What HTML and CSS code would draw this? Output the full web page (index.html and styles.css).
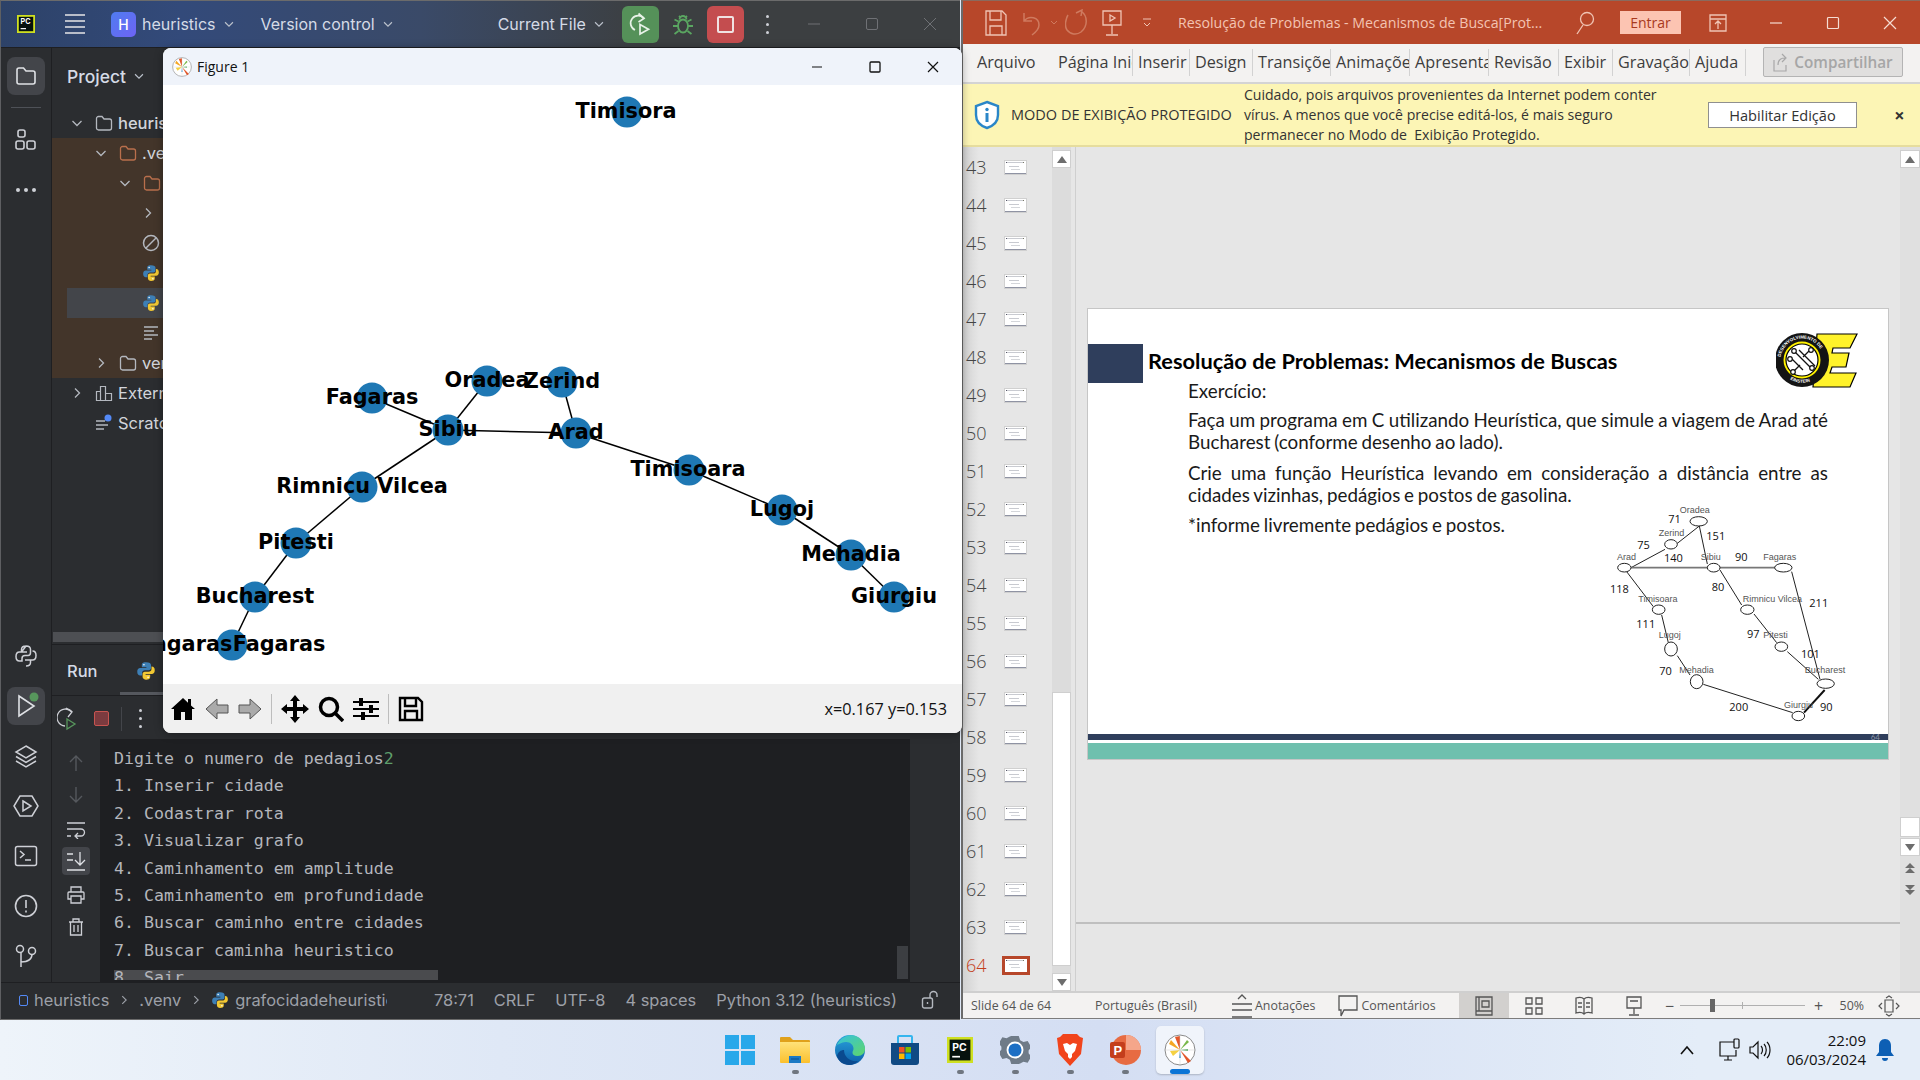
FILE: index.html
```html
<!DOCTYPE html>
<html lang="pt-BR">
<head>
  <meta charset="UTF-8" />
  <title>Desktop</title>
  <link rel="stylesheet" href="styles.css">
</head>
<body>
<svg class="defs" width="0" height="0">
  <defs>
    <linearGradient id="edgeBlue" x1="0" y1="0" x2="0" y2="1"><stop offset="0" stop-color="#2aa3dd"/><stop offset="1" stop-color="#0c5ea8"/></linearGradient>
    <linearGradient id="edgeGreen" x1="0" y1="0" x2="1" y2="1"><stop offset="0" stop-color="#35c1e0"/><stop offset="1" stop-color="#5fd66a"/></linearGradient>
    <linearGradient id="fold" x1="0" y1="0" x2="0" y2="1"><stop offset="0" stop-color="#ffe27a"/><stop offset="1" stop-color="#fbc02d"/></linearGradient>
  </defs>
  <symbol id="chev" viewBox="0 0 16 16"><path d="M3.500 6l4.500 4.500L12.500 6" fill="none" stroke="currentColor" stroke-width="1.300"/></symbol>
  <symbol id="chevr" viewBox="0 0 16 16"><path d="M6 3.500l4.500 4.500L6 12.500" fill="none" stroke="currentColor" stroke-width="1.300"/></symbol>
  <symbol id="folder" viewBox="0 0 18 18"><path d="M1.500 4.500a2 2 0 0 1 2-2h3.500l2 2.500h5.500a2 2 0 0 1 2 2v7a2 2 0 0 1-2 2h-11a2 2 0 0 1-2-2z" fill="none" stroke="currentColor" stroke-width="1.300"/></symbol>
  <symbol id="py" viewBox="0 0 24 24">
    <path d="M12 1.500c-4.500 0-5 1.800-5 3.500v2.500h5.500v1H5C3 8.500 1.500 10 1.500 13S3 17.500 5 17.500h2.300v-3c0-2 1.500-3.300 3.500-3.300h4.500c1.600 0 2.700-1.200 2.700-2.700V5c0-2-1.700-3.500-6-3.500z" fill="#3d7fb5"/>
    <path d="M12 22.500c4.500 0 5-1.800 5-3.500v-2.500h-5.500v-1H19c2 0 3.500-1.500 3.500-4.500S21 6.500 19 6.500h-.4v3c0 2-1.500 3.300-3.500 3.300h-4.500c-1.600 0-2.700 1.200-2.700 2.700V19c0 2 1.700 3.500 4.600 3.500z" fill="#f2c832"/>
    <circle cx="9.500" cy="4.500" r="1" fill="#fff"/><circle cx="14.500" cy="19.500" r="1" fill="#fff"/>
  </symbol>
  <symbol id="mpl" viewBox="0 0 32 32">
    <circle cx="16" cy="16" r="15" fill="#fff" stroke="#8a8a8a"/>
    <path d="M16 16L5 10l2-4z" fill="#f5a623"/><path d="M16 16L11 3l5-1z" fill="#e2572b"/><path d="M16 16l7-10 2 2z" fill="#79b84a"/>
    <path d="M16 16l11 11 -3 2z" fill="#e2572b"/><path d="M16 16L9 22l-3-5z" fill="#f5d142"/><path d="M16 16l1 8-2 0z" fill="#4c9fd6"/><path d="M16 16l8 1 0-2z" fill="#4fae5b"/>
    <path d="M2 16h28M16 2v28" stroke="#cfcfcf" stroke-width=".5"/>
  </symbol>
  <symbol id="pc" viewBox="0 0 20 20"><rect x="1" y="1" width="18" height="18" fill="#06120e" stroke="#cfe021" stroke-width="2"/><text x="4" y="10.500" font-size="8" font-family="Inter" font-weight="700" fill="#fff">PC</text><rect x="4" y="14.500" width="6" height="1.300" fill="#fff"/></symbol>
</svg>

<div class="desktop">

  <!-- PyCharm -->
  <div class="ide">
    <div class="ide-top">
      <svg class="pc-logo"><use href="#pc"/></svg>
      <div class="burger"><i></i><i></i><i></i><i></i></div>
      <div class="h-tile">H</div>
      <span class="top-label">heuristics</span><svg class="top-chev"><use href="#chev"/></svg>
      <span class="top-label vc">Version control</span><svg class="top-chev"><use href="#chev"/></svg>
      <span class="top-label cf">Current File</span><svg class="top-chev"><use href="#chev"/></svg>
      <div class="btn-green">
        <svg width="22" height="24" viewBox="0 0 22 24" fill="none" stroke="#e8f2e8" stroke-width="1.700"><path d="M15 6.500A7.500 7.500 0 1 0 6 18"/><path d="M9.500 1.500l5.500 5-5.500 3.500"/><path d="M11 12.500l8.500 4.800-8.500 4.700z"/></svg>
      </div>
      <svg class="bug" width="22" height="22" viewBox="0 0 22 22" fill="none" stroke="#5aa661" stroke-width="1.800"><ellipse cx="11" cy="13" rx="5" ry="6.500"/><path d="M7.500 6.500a3.500 3.500 0 0 1 7 0M7 3l2 2M15 3l-2 2M6 13H1M21 13h-5M6.500 18L2.500 21M15.500 18l4 3M6.500 8.500L2.500 6.500M15.500 8.500l4-2"/></svg>
      <div class="btn-red"><i></i></div>
      <div class="kebab"><i></i><i></i><i></i></div>
      <div class="win-btns dim">
        <svg width="14" height="14" viewBox="0 0 14 14"><path d="M1 7h12" stroke="currentColor"/></svg>
        <svg width="14" height="14" viewBox="0 0 14 14"><rect x="1.500" y="1.500" width="11" height="11" rx="1.500" fill="none" stroke="currentColor"/></svg>
        <svg width="14" height="14" viewBox="0 0 14 14"><path d="M1 1l12 12M13 1L1 13" stroke="currentColor"/></svg>
      </div>
    </div>

    <div class="ide-main">
      <div class="strip">
        <div class="strip-group">
          <div class="tool on"><svg width="24" height="24" viewBox="0 0 24 24" fill="none" stroke="#dfe1e5" stroke-width="1.600"><path d="M3 6a2 2 0 0 1 2-2h4.500l2.500 3h7a2 2 0 0 1 2 2v9a2 2 0 0 1-2 2H5a2 2 0 0 1-2-2z"/></svg></div>
          <div class="strip-sep"></div>
          <div class="tool"><svg width="22" height="24" viewBox="0 0 22 24" fill="none" stroke="#ced0d6" stroke-width="1.600"><rect x="3" y="2" width="7" height="7" rx="2"/><rect x="1" y="13" width="8" height="8" rx="2"/><rect x="12" y="13" width="8" height="8" rx="2"/></svg></div>
          <div class="tool"><svg width="22" height="6" viewBox="0 0 22 6" fill="#ced0d6"><circle cx="3" cy="3" r="2"/><circle cx="11" cy="3" r="2"/><circle cx="19" cy="3" r="2"/></svg></div>
        </div>
        <div class="strip-group">
          <div class="tool"><svg width="24" height="24" viewBox="0 0 24 24" fill="none" stroke="#ced0d6" stroke-width="1.500"><path d="M12 2c-3.500 0-4.500 1.500-4.500 3.500V8H13M7.500 8H5.500C3.500 8 2 9.500 2 12.500S3.500 17 5.500 17H8v-2.500c0-2 1.500-3 3-3h3c2 0 2.500-1 2.500-3v-3C16.500 3.500 15.500 2 12 2zM12 22c3.500 0 4.500-1.500 4.500-3.500V16H11M16.500 16h2c2 0 3.500-1.500 3.500-4.500S20.500 7 18.500 7"/></svg></div>
          <div class="tool on"><svg width="30" height="30" viewBox="0 0 30 30" fill="none"><path d="M8 5l15 10-15 10z" stroke="#dfe1e5" stroke-width="1.600"/><circle cx="23" cy="6" r="4.500" fill="#57965c"/></svg></div>
          <div class="tool"><svg width="24" height="24" viewBox="0 0 24 24" fill="none" stroke="#ced0d6" stroke-width="1.500"><path d="M12 2l10 6-10 6L2 8zM2 12.500l10 6 10-6M2 17l10 6 10-6"/></svg></div>
          <div class="tool"><svg width="26" height="24" viewBox="0 0 26 24" fill="none" stroke="#ced0d6" stroke-width="1.500"><path d="M7 2h12l6 10-6 10H7L1 12z"/><path d="M10 7l8 5-8 5z"/></svg></div>
          <div class="tool"><svg width="24" height="22" viewBox="0 0 24 22" fill="none" stroke="#ced0d6" stroke-width="1.500"><rect x="1.500" y="1.500" width="21" height="19" rx="2"/><path d="M6 6l4 3.500L6 13M11 15h6"/></svg></div>
          <div class="tool"><svg width="24" height="24" viewBox="0 0 24 24" fill="none" stroke="#ced0d6" stroke-width="1.600"><circle cx="12" cy="12" r="10.500"/><path d="M12 6v8M12 16.500v2"/></svg></div>
          <div class="tool"><svg width="22" height="24" viewBox="0 0 22 24" fill="none" stroke="#ced0d6" stroke-width="1.500"><circle cx="5" cy="5" r="3.500"/><circle cx="17" cy="7" r="3.500"/><path d="M6 9v14M6 18c6 0 11-2 11-8"/></svg></div>
        </div>
      </div>

      <div class="ide-content">
        <div class="project">
          <div class="project-head"><span>Project</span><svg class="top-chev"><use href="#chev"/></svg></div>
          <div class="row lv1"><svg class="chev"><use href="#chev"/></svg><svg class="ico gray"><use href="#folder"/></svg><b>heuristics</b></div>
          <div class="row lv2 brown"><svg class="chev"><use href="#chev"/></svg><svg class="ico orange"><use href="#folder"/></svg><span>.venv</span></div>
          <div class="row lv3 brown"><svg class="chev"><use href="#chev"/></svg><svg class="ico orange"><use href="#folder"/></svg><span>Lib</span></div>
          <div class="row lv4 brown"><svg class="chev"><use href="#chevr"/></svg></div>
          <div class="row lv5 brown"><svg class="ico" viewBox="0 0 18 18" fill="none" stroke="#b4b8bf" stroke-width="1.500"><circle cx="9" cy="9" r="7.500"/><path d="M4 14L14 4"/></svg></div>
          <div class="row lv5 brown"><svg class="ico"><use href="#py"/></svg></div>
          <div class="row lv5 brown selected"><svg class="ico"><use href="#py"/></svg></div>
          <div class="row lv5 brown"><svg class="ico" viewBox="0 0 18 18" stroke="#b4b8bf" stroke-width="1.500"><path d="M2 3h14M2 7h10M2 11h14M2 15h8"/></svg></div>
          <div class="row lv2 brown"><svg class="chev"><use href="#chevr"/></svg><svg class="ico gray"><use href="#folder"/></svg><span>venv</span></div>
          <div class="row lv1"><svg class="chev"><use href="#chevr"/></svg><svg class="ico" viewBox="0 0 18 18" fill="none" stroke="#b4b8bf" stroke-width="1.200"><path d="M1.500 16.500v-9h4v9zM5.500 16.500v-14h5v14zM10.500 16.500v-7h6v7z"/></svg><span>External Libraries</span></div>
          <div class="row lv1"><i class="chev"></i><svg class="ico" viewBox="0 0 18 18"><path d="M1 7h9M1 11h12M1 15h8" stroke="#b4b8bf" stroke-width="1.500"/><circle cx="13" cy="4" r="3.500" fill="#548af7"/></svg><span>Scratches</span></div>
          <div class="h-scroll"></div>
        </div>

        <div class="run-head">
          <span>Run</span>
          <svg class="run-py"><use href="#py"/></svg>
          <i class="run-dot"></i>
          <i class="run-tab"></i>
        </div>
        <div class="run-tools">
          <svg width="22" height="26" viewBox="0 0 22 26" fill="none" stroke="#ced0d6" stroke-width="1.300"><path d="M15 6A8.500 8.500 0 1 0 8 20"/><path d="M9 2l6 4-4 5"/><path d="M10 13l8 5-8 5z" stroke="#57965c"/></svg>
          <i class="stop"></i>
          <i class="tool-sep"></i>
          <div class="kebab small"><i></i><i></i><i></i></div>
        </div>
        <div class="run-body">
          <div class="gutter">
            <svg width="16" height="18" viewBox="0 0 16 18" fill="none" stroke="#55585d" stroke-width="1.400"><path d="M8 17V2M2 8l6-6 6 6"/></svg>
            <svg width="16" height="18" viewBox="0 0 16 18" fill="none" stroke="#55585d" stroke-width="1.400"><path d="M8 1v15M2 10l6 6 6-6"/></svg>
            <svg width="20" height="18" viewBox="0 0 20 18" fill="none" stroke="#ced0d6" stroke-width="1.300"><path d="M1 2h18M1 8h14a3 3 0 0 1 0 7H9M12 12l-3 3 3 3M1 15h4"/></svg>
            <div class="gut-on"><svg width="20" height="20" viewBox="0 0 20 20" fill="none" stroke="#dfe1e5" stroke-width="1.300"><path d="M1 3h6M1 9h6M1 19h18M14 1v13M9 9l5 5 5-5"/></svg></div>
            <svg width="20" height="18" viewBox="0 0 20 18" fill="none" stroke="#ced0d6" stroke-width="1.300"><path d="M5 6V1h10v5M5 13H2V7a1 1 0 0 1 1-1h14a1 1 0 0 1 1 1v6h-3M5 10h10v7H5z"/></svg>
            <svg width="16" height="18" viewBox="0 0 16 18" fill="none" stroke="#ced0d6" stroke-width="1.300"><path d="M1 4h14M5 4V1h6v3M2.500 4v13h11V4M6 7v7M10 7v7"/></svg>
          </div>
          <div class="console">
            <i class="con-hbar"></i>
            <i class="con-vbar"></i>
            <div class="con-line">Digite o numero de pedagios<em>2</em></div>
            <div class="con-line">1. Inserir cidade</div>
            <div class="con-line">2. Codastrar rota</div>
            <div class="con-line">3. Visualizar grafo</div>
            <div class="con-line">4. Caminhamento em amplitude</div>
            <div class="con-line">5. Caminhamento em profundidade</div>
            <div class="con-line">6. Buscar caminho entre cidades</div>
            <div class="con-line">7. Buscar caminha heuristico</div>
            <div class="con-line">8. Sair</div>
          </div>
          <div class="con-right"></div>
        </div>
      </div>
    </div>

    <div class="ide-status">
      <i class="mod-square"></i><span class="st-a">heuristics</span>
      <svg class="st-chev"><use href="#chevr"/></svg><span>.venv</span>
      <svg class="st-chev"><use href="#chevr"/></svg>
      <svg class="st-py"><use href="#py"/></svg><span class="st-file">grafocidadeheuristica.py</span>
      <div class="st-right">
        <span>78:71</span><span>CRLF</span><span>UTF-8</span><span>4 spaces</span><span>Python 3.12 (heuristics)</span>
        <svg width="18" height="20" viewBox="0 0 18 20" fill="none" stroke="#b4b8bf" stroke-width="1.400"><rect x="1.500" y="8" width="10" height="10" rx="2"/><path d="M9 8V5a3.500 3.500 0 0 1 7 0v2"/><path d="M6.500 12v2"/></svg>
      </div>
    </div>
  </div>

  <!-- PowerPoint -->
  <div class="ppt">
    <div class="ppt-top">
      <svg class="q1" width="22" height="26" viewBox="0 0 22 26" fill="none" stroke="#f0c4b4" stroke-width="1.300"><path d="M1 1h16l4 4v20H1z"/><path d="M5 1v9h11V1M5 25v-9h12v9"/></svg>
      <svg class="q2" width="20" height="26" viewBox="0 0 20 26" fill="none" stroke="#cf7a5f" stroke-width="1.500"><path d="M2 3v8h8M2 11c5-6 15-4 15 4 0 4-3 7-7 10"/></svg>
      <svg class="q3" width="8" height="6" viewBox="0 0 8 6" fill="none" stroke="#cf7a5f"><path d="M1 1l3 3 3-3"/></svg>
      <svg class="q4" width="24" height="28" viewBox="0 0 24 28" fill="none" stroke="#cf7a5f" stroke-width="1.500"><path d="M11 4l6-3-1 6M16 2c7 5 7 15 0 21a10 10 0 0 1-14-2C-1 17 1 9 3 6"/></svg>
      <svg class="q5" width="20" height="26" viewBox="0 0 20 26" fill="none" stroke="#f0c4b4" stroke-width="1.300"><path d="M1 1h18v14H1zM10 15v9M4 25h12M8 5l5 3-5 3z"/></svg>
      <svg class="q6" width="10" height="10" viewBox="0 0 10 10" fill="none" stroke="#f0c4b4"><path d="M1 1h8M2 5l3 3 3-3"/></svg>
      <span class="ppt-title">Resolução de Problemas - Mecanismos de Busca[Prot...</span>
      <svg class="q7" width="20" height="24" viewBox="0 0 20 24" fill="none" stroke="#f0c4b4" stroke-width="1.300"><circle cx="12" cy="8" r="6.500"/><path d="M8 14L2 23"/></svg>
      <div class="entrar">Entrar</div>
      <svg class="q8" width="18" height="18" viewBox="0 0 18 18" fill="none" stroke="#f0c4b4" stroke-width="1.300"><path d="M1 1h16v16H1zM1 5h16M9 15V8M6 10l3-3 3 3"/></svg>
      <div class="win-btns light">
        <svg width="14" height="14" viewBox="0 0 14 14"><path d="M1 7h12" stroke="currentColor" stroke-width="1.200"/></svg>
        <svg width="14" height="14" viewBox="0 0 14 14"><rect x="1.500" y="1.500" width="11" height="11" rx="1" fill="none" stroke="currentColor" stroke-width="1.200"/></svg>
        <svg width="14" height="14" viewBox="0 0 14 14"><path d="M1 1l12 12M13 1L1 13" stroke="currentColor" stroke-width="1.200"/></svg>
      </div>
    </div>

    <div class="ribbon">
      <div class="tab first">Arquivo</div>
      <div class="tab">Página Inicial</div>
      <div class="tab">Inserir</div>
      <div class="tab">Design</div>
      <div class="tab">Transições</div>
      <div class="tab">Animações</div>
      <div class="tab">Apresentação</div>
      <div class="tab">Revisão</div>
      <div class="tab">Exibir</div>
      <div class="tab">Gravação</div>
      <div class="tab">Ajuda</div>
      <div class="share">
        <svg width="16" height="20" viewBox="0 0 16 20" fill="none" stroke="#a8a8a8" stroke-width="1.200"><path d="M1 8v11h12v-6M5 13c0-5 3-7 7-7M9 2l4 4-4 4"/></svg>
        <span>Compartilhar</span>
      </div>
    </div>

    <div class="protected">
      <svg class="shield" width="26" height="30" viewBox="0 0 26 30"><path d="M13 2l11 4v9c0 7-5 11-11 13C7 26 2 22 2 15V6z" fill="#fff" stroke="#2a86c8" stroke-width="2.400"/><circle cx="13" cy="9.500" r="1.700" fill="#2a86c8"/><rect x="11.500" y="13" width="3" height="9" fill="#2a86c8"/></svg>
      <span class="prot-title">MODO DE EXIBIÇÃO PROTEGIDO</span>
      <div class="prot-text">Cuidado, pois arquivos provenientes da Internet podem conter<br>vírus. A menos que você precise editá-los, é mais seguro<br>permanecer no Modo de&nbsp; Exibição Protegido.</div>
      <div class="enable">Habilitar Edição</div>
      <span class="prot-x">×</span>
    </div>

    <div class="ppt-body">
      <div class="thumbs">
        <div class="th"><span>43</span><i></i></div>
        <div class="th"><span>44</span><i></i></div>
        <div class="th"><span>45</span><i></i></div>
        <div class="th"><span>46</span><i></i></div>
        <div class="th"><span>47</span><i></i></div>
        <div class="th"><span>48</span><i></i></div>
        <div class="th"><span>49</span><i></i></div>
        <div class="th"><span>50</span><i></i></div>
        <div class="th"><span>51</span><i></i></div>
        <div class="th"><span>52</span><i></i></div>
        <div class="th"><span>53</span><i></i></div>
        <div class="th"><span>54</span><i></i></div>
        <div class="th"><span>55</span><i></i></div>
        <div class="th"><span>56</span><i></i></div>
        <div class="th"><span>57</span><i></i></div>
        <div class="th"><span>58</span><i></i></div>
        <div class="th"><span>59</span><i></i></div>
        <div class="th"><span>60</span><i></i></div>
        <div class="th"><span>61</span><i></i></div>
        <div class="th"><span>62</span><i></i></div>
        <div class="th"><span>63</span><i></i></div>
        <div class="th cur"><span>64</span><i></i></div>
      </div>
      <div class="thumb-scroll">
        <div class="sb-btn up"></div>
        <div class="sb-thumb"></div>
        <div class="sb-btn down"></div>
      </div>
      <div class="editor">
        <div class="slide-area">
          <div class="slide">
            <div class="slide-head"><i class="slide-square"></i><h2>Resolução de Problemas: Mecanismos de Buscas</h2></div>
            <div class="slide-text">
              <p class="ex">Exercício:</p>
              <p>Faça um programa em C utilizando Heurística, que simule a viagem de Arad até Bucharest (conforme desenho ao lado).</p>
              <p>Crie uma função Heurística levando em consideração a distância entre as cidades vizinhas, pedágios e postos de gasolina.</p>
              <p>*informe livremente pedágios e postos.</p>
            </div>
            <svg class="slide-logo" width="84" height="58" viewBox="0 0 84 58">
              <path d="M41 1h40l-7 14H57l-1 5h17l-3 14H56l-2 6h26l-6 14H37z" fill="#fff22a" stroke="#000" stroke-width="1.200"/>
              <circle cx="26" cy="27" r="27" fill="#141414"/>
              <circle cx="26" cy="27" r="18.500" fill="#fff200"/>
              <circle cx="26" cy="27" r="16" fill="#fff" stroke="#000" stroke-width="1.200"/>
              <path id="ringtop" d="M4.500 27a21.500 21.500 0 0 1 43 0" fill="none"/>
              <path id="ringbot" d="M8 41a23 23 0 0 0 36 0" fill="none"/>
              <text font-size="4.500" font-weight="700" font-family="Liberation Sans" fill="#fff"><textPath href="#ringtop" startOffset="3">DESENVOLVIMENTO DE</textPath></text>
              <text font-size="4.500" font-weight="700" font-family="Liberation Sans" fill="#fff"><textPath href="#ringbot" startOffset="8">EINSTEIN</textPath></text>
              <path d="M19 19l16 16M23 17l16 16M16 26l11 11M18 38l6-6M33 18l-6 6" fill="none" stroke="#111" stroke-width="1.300"/>
              <g fill="#fff" stroke="#111" stroke-width="1.200"><circle cx="18" cy="18" r="2.300"/><circle cx="14" cy="26" r="2.300"/><circle cx="35" cy="17" r="2.300"/><circle cx="17" cy="39" r="2.300"/><circle cx="36" cy="35" r="2.300"/></g>
            </svg>
            <svg class="map" width="300" height="240" viewBox="0 0 900 720">
              <g fill="none" stroke="#222" stroke-width="3">
                <path d="M93 233L195 178M232 160L298 108M298 108L322 222M80 245L160 350M185 375L205 458M232 497L270 555M310 583L578 668M360 240L425 345M462 372L530 458M562 485L655 568M575 245L660 568"/>
                <path d="M93 233H525" stroke="#777" stroke-width="5"/>
                <path d="M612 668L674 600" stroke="#111" stroke-width="6"/>
                <ellipse cx="296" cy="94" rx="26" ry="14" fill="#fff"/><ellipse cx="213" cy="163" rx="19" ry="14" fill="#fff"/>
                <ellipse cx="73" cy="233" rx="20" ry="13" fill="#fff"/><ellipse cx="341" cy="233" rx="19" ry="13" fill="#fff"/>
                <ellipse cx="550" cy="233" rx="26" ry="13" fill="#fff"/><ellipse cx="176" cy="359" rx="19" ry="14" fill="#fff"/>
                <ellipse cx="442" cy="359" rx="20" ry="14" fill="#fff"/><ellipse cx="213" cy="477" rx="19" ry="21" fill="#fff"/>
                <ellipse cx="544" cy="470" rx="19" ry="14" fill="#fff"/><ellipse cx="290" cy="575" rx="19" ry="21" fill="#fff"/>
                <ellipse cx="677" cy="581" rx="26" ry="14" fill="#fff"/><ellipse cx="595" cy="678" rx="19" ry="14" fill="#fff"/>
              </g>
              <g class="map-names">
                <text x="239" y="69">Oradea</text><text x="176" y="139">Zerind</text><text x="51" y="211">Arad</text>
                <text x="302" y="211">Sibiu</text><text x="490" y="211">Fagaras</text><text x="115" y="337">Timisoara</text>
                <text x="428" y="337">Rimnicu Vilcea</text><text x="176" y="444">Lugoj</text><text x="490" y="443">Pitesti</text>
                <text x="238" y="549">Mehadia</text><text x="614" y="549">Bucharest</text><text x="552" y="655">Giurgiu</text>
              </g>
              <g class="map-nums">
                <text x="205" y="100">71</text><text x="319" y="151">151</text><text x="112" y="178">75</text><text x="192" y="217">140</text>
                <text x="405" y="213">90</text><text x="335" y="304">80</text><text x="30" y="310">118</text><text x="628" y="350">211</text>
                <text x="109" y="415">111</text><text x="441" y="443">97</text><text x="603" y="505">101</text><text x="178" y="556">70</text>
                <text x="388" y="664">200</text><text x="660" y="664">90</text>
              </g>
            </svg>
            <div class="slide-foot"><span>64</span></div>
            <div class="slide-teal"></div>
          </div>
        </div>
        <div class="notes-area"></div>
      </div>
      <div class="main-scroll">
        <div class="sb-btn up"></div>
        <div class="sb-gap"></div>
        <div class="sb-small"></div>
        <div class="sb-btn down"></div>
        <svg class="page-arrows" width="12" height="32" viewBox="0 0 12 32" fill="#6d6d6d"><path d="M6 0l5 5H1zM6 5l5 5H1zM1 22h10l-5 5zM1 27h10l-5 5z"/></svg>
      </div>
    </div>

    <div class="ppt-status">
      <span class="ps1">Slide 64 de 64</span>
      <span class="ps2">Português (Brasil)</span>
      <svg class="ps3" width="22" height="26" viewBox="0 0 22 26" fill="none" stroke="#555" stroke-width="1.300"><path d="M7 6l4-4 4 4M1 11h20M1 17h20M1 24h20"/></svg>
      <span>Anotações</span>
      <svg class="ps4" width="20" height="22" viewBox="0 0 20 22" fill="none" stroke="#555" stroke-width="1.300"><path d="M1 1h18v14H6l-3 6v-6H1z"/></svg>
      <span>Comentários</span>
      <div class="vw on"><svg width="18" height="20" viewBox="0 0 18 20" fill="none" stroke="#555" stroke-width="1.300"><path d="M1 1h16v18H1zM1 15h16M4 1v14M7 5h7v6H7z"/></svg></div>
      <div class="vw"><svg width="18" height="18" viewBox="0 0 18 18" fill="none" stroke="#555" stroke-width="1.300"><path d="M1 1h6v6H1zM11 1h6v6h-6zM1 11h6v6H1zM11 11h6v6h-6z"/></svg></div>
      <div class="vw"><svg width="18" height="20" viewBox="0 0 18 20" fill="none" stroke="#555" stroke-width="1.300"><path d="M1 2c3-1 6-1 8 1 2-2 5-2 8-1v15c-3-1-6-1-8 1-2-2-5-2-8-1zM9 3v15M3 7h4M3 11h4M11 7h4M11 11h4"/></svg></div>
      <div class="vw"><svg width="18" height="20" viewBox="0 0 18 20" fill="none" stroke="#555" stroke-width="1.300"><path d="M2 1h14v11H2zM9 12v6M4 19h10M5 5h8"/></svg></div>
      <span class="zm">−</span>
      <div class="slider"><i class="knob"></i><i class="tick"></i></div>
      <span class="zm">+</span>
      <span class="pct">50%</span>
      <svg width="22" height="22" viewBox="0 0 22 22" fill="none" stroke="#555" stroke-width="1.200"><path d="M7 5h8v12H7zM8 3l3-2 3 2M8 19l3 2 3-2M4 8l-3 3 3 3M18 8l3 3-3 3"/></svg>
    </div>
  </div>

  <!-- Matplotlib figure -->
  <div class="figure">
    <div class="fig-title">
      <svg class="fig-ico"><use href="#mpl"/></svg>
      <span>Figure 1</span>
      <div class="win-btns dark">
        <svg width="14" height="14" viewBox="0 0 14 14"><path d="M2 7h10" stroke="currentColor" stroke-width="1.200"/></svg>
        <svg width="14" height="14" viewBox="0 0 14 14"><rect x="2" y="2" width="10" height="10" rx="1" fill="none" stroke="currentColor" stroke-width="1.300"/></svg>
        <svg width="14" height="14" viewBox="0 0 14 14"><path d="M2 2l10 10M12 2L2 12" stroke="currentColor" stroke-width="1.200"/></svg>
      </div>
    </div>
    <svg class="plot" width="799" height="599" viewBox="163 85 799 599">
      <g stroke="#000" stroke-width="1.500">
        <line x1="487" y1="381" x2="448" y2="430"/><line x1="562" y1="382" x2="576" y2="433"/>
        <line x1="372" y1="398" x2="448" y2="430"/><line x1="448" y1="430" x2="576" y2="433"/>
        <line x1="576" y1="433" x2="689" y2="470"/><line x1="448" y1="430" x2="362" y2="487"/>
        <line x1="689" y1="470" x2="782" y2="510"/><line x1="782" y1="510" x2="851" y2="555"/>
        <line x1="851" y1="555" x2="894" y2="597"/><line x1="362" y1="487" x2="296" y2="543"/>
        <line x1="296" y1="543" x2="255" y2="597"/><line x1="255" y1="597" x2="232" y2="645"/>
      </g>
      <g fill="#1f78b4">
        <circle cx="627" cy="112" r="15.500"/><circle cx="487" cy="381" r="15.500"/><circle cx="562" cy="382" r="15.500"/>
        <circle cx="372" cy="398" r="15.500"/><circle cx="448" cy="430" r="15.500"/><circle cx="576" cy="433" r="15.500"/>
        <circle cx="689" cy="470" r="15.500"/><circle cx="362" cy="487" r="15.500"/><circle cx="782" cy="510" r="15.500"/>
        <circle cx="296" cy="543" r="15.500"/><circle cx="851" cy="555" r="15.500"/><circle cx="894" cy="597" r="15.500"/>
        <circle cx="255" cy="597" r="15.500"/><circle cx="232" cy="645" r="15.500"/>
      </g>
      <g class="plot-labels">
        <text x="626" y="118">Timisora</text>
        <text x="487" y="387">Oradea</text><text x="562" y="388">Zerind</text>
        <text x="372" y="404">Fagaras</text><text x="448" y="436">Sibiu</text><text x="576" y="439">Arad</text>
        <text x="688" y="476">Timisoara</text><text x="362" y="493">Rimnicu Vilcea</text><text x="782" y="516">Lugoj</text>
        <text x="296" y="549">Pitesti</text><text x="851" y="561">Mehadia</text><text x="894" y="603">Giurgiu</text>
        <text x="255" y="603">Bucharest</text><text x="186" y="651">Fagaras</text><text x="279" y="651">Fagaras</text>
      </g>
    </svg>
    <div class="fig-tools">
      <svg width="26" height="26" viewBox="0 0 26 26"><path d="M13 2L1 13h3v11h7v-8h4v8h7V13h3l-4-3.600V3h-3v3.700z"/></svg>
      <svg class="gr" width="24" height="24" viewBox="0 0 24 24"><path d="M12 2L1 12l11 10v-6h11V8H12z"/></svg>
      <svg class="gr" width="24" height="24" viewBox="0 0 24 24"><path d="M12 2l11 10-11 10v-6H1V8h11z"/></svg>
      <i class="ft-sep"></i>
      <svg width="28" height="28" viewBox="0 0 28 28"><path d="M14 0l5 6h-3v6h6V9l6 5-6 5v-3h-6v6h3l-5 6-5-6h3v-6H6v3l-6-5 6-5v3h6V6H9z"/></svg>
      <svg width="26" height="26" viewBox="0 0 26 26" fill="none" stroke="#000" stroke-width="3.500"><circle cx="11" cy="11" r="8.500"/><path d="M17 17l8 8"/></svg>
      <svg width="26" height="24" viewBox="0 0 26 24"><path d="M0 4h26v2H0zM0 11h26v2H0zM0 18h26v2H0z"/><path d="M6 1h4v8H6zM16 8h4v8h-4zM8 15h4v8H8z"/></svg>
      <i class="ft-sep"></i>
      <svg width="26" height="26" viewBox="0 0 26 26" fill="none" stroke="#000" stroke-width="2.400"><path d="M2 2h18l4 4v18H2z"/><path d="M7 2v8h11V2M7 24v-9h12v9"/></svg>
      <span class="coords">x=0.167 y=0.153</span>
    </div>
  </div>

  <!-- Taskbar -->
  <div class="taskbar">
    <div class="task"><svg width="32" height="32" viewBox="0 0 32 32"><path d="M1 1h14v14H1zM17 1h14v14H17zM1 17h14v14H1zM17 17h14v14H17z" fill="#29a8ea"/></svg></div>
    <div class="task dot"><svg width="32" height="28" viewBox="0 0 32 28"><path d="M1 2a1 1 0 0 1 1-1h9l3 3h16a1 1 0 0 1 1 1v20H1z" fill="#e0a11c"/><path d="M1 6h30v20a1 1 0 0 1-1 1H2a1 1 0 0 1-1-1z" fill="url(#fold)"/><path d="M10 20h12v7H10z" fill="#1c79c4"/><path d="M12 23h8" stroke="#0d4f8c"/></svg></div>
    <div class="task"><svg width="32" height="32" viewBox="0 0 32 32"><circle cx="16" cy="16" r="15" fill="url(#edgeBlue)"/><path d="M2.500 12C6 3 14 1 18 1.300c8 .7 13 6.700 13 13.700 0 4-3 7-7.500 7-3.500 0-5-1.500-5-3.500 0-1.500 1-2 1-4 0-4-4-7-8-6.500-4 .5-7 2-9.500 3.500z" fill="url(#edgeGreen)"/><path d="M10 16c0 7 6 12 14 11-2 2-5 4-9 4-6 0-11-4-12-9 1-4 4-6 7-6z" fill="#0a4a8f"/></svg></div>
    <div class="task"><svg width="30" height="32" viewBox="0 0 30 32"><path d="M1 9h28v19a3 3 0 0 1-3 3H4a3 3 0 0 1-3-3z" fill="#104a84"/><path d="M8 9V3a1 1 0 0 1 1-1h12a1 1 0 0 1 1 1v6" fill="none" stroke="#35b5ee" stroke-width="2"/><path d="M9 13h5.500v5.500H9z" fill="#f25022"/><path d="M15.500 13H21v5.500h-5.500z" fill="#7fba00"/><path d="M9 19.500h5.500V25H9z" fill="#ffb900"/><path d="M15.500 19.500H21V25h-5.500z" fill="#00a4ef"/></svg></div>
    <div class="task dot"><svg width="26" height="26"><use href="#pc"/></svg></div>
    <div class="task dot"><svg width="30" height="30" viewBox="0 0 32 32"><path d="M12 1h8l1.500 4.500 3.500 2 4.500-1 4 6.500-3 3.500v3l3 3.500-4 6.500-4.500-1-3.500 2L20 31h-8l-1.500-4.500-3.500-2-4.500 1-4-6.500 3-3.500v-3l-3-3.500 4-6.500 4.500 1 3.500-2z" fill="#6f7b88"/><circle cx="16" cy="16" r="9" fill="#fff"/><circle cx="16" cy="16" r="7" fill="#1d6fc4"/></svg></div>
    <div class="task dot"><svg width="28" height="34" viewBox="0 0 28 34"><path d="M7 1h14l3 3 3 1-2 16-11 12L3 21 1 5l3-1z" fill="#f1441c"/><path d="M7 11l4-1 3 2 3-2 4 1-2 7-3 3v3l-2 2-2-2v-3l-3-3z" fill="#fff"/></svg></div>
    <div class="task dot"><svg width="32" height="32" viewBox="0 0 32 32"><circle cx="17" cy="16" r="15" fill="#e76b42"/><path d="M17 1a15 15 0 0 1 15 15H17z" fill="#f5a68a"/><rect x="1" y="8" width="15" height="16" rx="2" fill="#c43e1c"/><text x="4.500" y="21" font-size="13" font-weight="700" font-family="Liberation Sans" fill="#fff">P</text></svg></div>
    <div class="task active"><svg width="32" height="32"><use href="#mpl"/></svg></div>
    <div class="tray">
      <svg width="16" height="10" viewBox="0 0 16 10" fill="none" stroke="#111" stroke-width="1.600"><path d="M2 9l6-7 6 7"/></svg>
      <svg class="tr-net" width="24" height="24" viewBox="0 0 24 24" fill="none" stroke="#111" stroke-width="1.200"><path d="M16 4H2v14h16v-6M6 22h8M10 18v4"/><rect x="16" y="1" width="5" height="9" rx="1"/></svg>
      <svg width="22" height="20" viewBox="0 0 22 20" fill="none" stroke="#111" stroke-width="1.200"><path d="M1 7v6h3l5 5V2L4 7zM12 6c2 2 2 6 0 8M15 4c3 3 3 9 0 12M18 2c4 4 4 12 0 16"/></svg>
      <div class="clock">22:09<br>06/03/2024</div>
      <svg width="18" height="24" viewBox="0 0 18 24" fill="#0d5fb4"><path d="M9 1c-4 0-6 3-6 7v6l-3 4h18l-3-4V8c0-4-2-7-6-7zM6 20a3 3 0 0 0 6 0z"/></svg>
    </div>
  </div>
</div>
</body>
</html>
```

FILE: styles.css
```css
* {
  box-sizing: border-box;
}

body {
  margin: 0;
  background: #dfe8f6;
  overflow: hidden;
}

.defs {
  position: absolute;
}

.desktop {
  position: relative;
  width: 1920px;
  height: 1080px;
  overflow: hidden;
  font-family: "Open Sans", sans-serif;
}

i {
  display: block;
}

/* window buttons shared */
.win-btns {
  display: flex;
  margin-left: auto;
  gap: 44px;
}
.win-btns svg {
  display: block;
}
.win-btns.dim { color: #6f7175; }
.win-btns.light { color: #f6ddd3; }
.win-btns.dark { color: #111; }

/* ---------- PyCharm ---------- */
.ide {
  position: absolute;
  left: 0;
  top: 0;
  width: 960px;
  height: 1020px;
  display: flex;
  flex-direction: column;
  background: #2b2d30;
  border-left: 1px solid #5e5f62;
  border-top: 1px solid #6b6b6b;
  border-bottom: 1px solid #6b6b6b;
  font-family: Inter, sans-serif;
  color: #bcbec4;
}

.ide-top {
  height: 47px;
  flex: none;
  display: flex;
  align-items: center;
  background: linear-gradient(90deg, #2d4268 0, #334a7a 180px, #3a4a68 420px, #3c3f41 640px);
  border-bottom: 1px solid #1e1f22;
  padding-right: 23px;
}
.pc-logo {
  width: 18px;
  height: 18px;
  margin-left: 16px;
}
.burger {
  width: 20px;
  margin-left: 30px;
  display: flex;
  flex-direction: column;
  gap: 4px;
}
.burger i {
  height: 2px;
  background: #b8bdc9;
}
.h-tile {
  width: 25px;
  height: 25px;
  margin-left: 26px;
  border-radius: 5px;
  background: linear-gradient(135deg, #4f7cf0, #6e63f5);
  color: #fff;
  font-size: 14px;
  font-weight: 500;
  text-align: center;
  line-height: 25px;
}
.top-label {
  margin-left: 6px;
  font-size: 16px;
  color: #d5dbe6;
  white-space: nowrap;
}
.top-label.vc { margin-left: 25px; }
.top-label.cf { margin-left: 103px; }
.top-chev {
  width: 14px;
  height: 14px;
  flex: none;
  margin-left: 6px;
  color: #bcc2cc;
}
.btn-green {
  width: 37px;
  height: 37px;
  margin-left: 16px;
  border-radius: 6px;
  background: #559159;
  display: flex;
  align-items: center;
  justify-content: center;
}
.bug {
  margin-left: 13px;
}
.btn-red {
  width: 37px;
  height: 37px;
  margin-left: 13px;
  border-radius: 6px;
  background: #c44d4f;
  display: flex;
  align-items: center;
  justify-content: center;
}
.btn-red i {
  width: 17px;
  height: 17px;
  border: 2px solid #f0e2e2;
  border-radius: 2px;
}
.kebab {
  display: flex;
  flex-direction: column;
  gap: 5px;
  margin-left: 22px;
}
.kebab i {
  width: 3px;
  height: 3px;
  background: #ced0d6;
  border-radius: 50%;
}
.kebab.small {
  margin-left: 17px;
}

.ide-main {
  flex: 1;
  display: flex;
  min-height: 0;
}

.strip {
  width: 51px;
  flex: none;
  display: flex;
  flex-direction: column;
  justify-content: space-between;
  align-items: center;
  padding: 9px 0 7px;
  border-right: 1px solid #1e1f22;
}
.strip-group {
  display: flex;
  flex-direction: column;
  align-items: center;
  gap: 12px;
}
.tool {
  width: 38px;
  height: 38px;
  border-radius: 8px;
  display: flex;
  align-items: center;
  justify-content: center;
}
.tool.on {
  background: #43454a;
}
.strip-sep {
  width: 30px;
  height: 1px;
  margin-bottom: 1px;
  background: #4e5157;
}

.ide-content {
  flex: 1;
  display: flex;
  flex-direction: column;
  min-width: 0;
}

.project {
  height: 597px;
  flex: none;
  position: relative;
  border-bottom: 1px solid #1e1f22;
  font-size: 16.500px;
}
.project-head {
  height: 60px;
  padding: 0 0 4px 15px;
  display: flex;
  align-items: center;
  font-size: 17.500px;
  font-weight: 500;
  color: #d5dbe6;
}
.row {
  height: 30px;
  display: flex;
  align-items: center;
  color: #d2d5db;
}
.row b {
  font-weight: 500;
}
.chev {
  width: 16px;
  height: 16px;
  flex: none;
  margin-right: 10px;
  color: #b4b8bf;
}
.ico {
  width: 18px;
  height: 18px;
  flex: none;
  margin-right: 5px;
}
.ico.gray { color: #b4b8bf; }
.ico.orange { color: #b96f4c; }
.lv1 { padding-left: 17px; }
.lv2 { padding-left: 41px; }
.lv3 { padding-left: 65px; }
.lv4 { padding-left: 88px; }
.lv5 { padding-left: 90px; }
.brown { background: #43352a; }
.selected {
  background: linear-gradient(90deg, #43352a 15px, #43454a 15px);
}
.h-scroll {
  position: absolute;
  left: 1px;
  right: 0;
  bottom: 2px;
  height: 10px;
  background: #4d4f53;
}

.run-head {
  height: 51px;
  flex: none;
  position: relative;
  padding: 2px 0 0 15px;
  display: flex;
  align-items: center;
  border-bottom: 1px solid #1e1f22;
  font-size: 16.500px;
  font-weight: 500;
  color: #d5dbe6;
}
.run-py {
  width: 20px;
  height: 20px;
  margin-left: 38px;
}
.run-dot {
  position: absolute;
  left: 145px;
  top: 14px;
  width: 7px;
  height: 7px;
  border-radius: 50%;
  background: #57965c;
}
.run-tab {
  position: absolute;
  left: 68px;
  right: 0;
  bottom: 0;
  height: 3px;
  background: #55585e;
}
.run-tools {
  height: 43px;
  flex: none;
  display: flex;
  align-items: center;
  padding: 2px 0 0 5px;
}
.stop {
  width: 15px;
  height: 15px;
  margin-left: 15px;
  background: #7b3b3f;
  border: 1.500px solid #c75450;
  border-radius: 2px;
}
.tool-sep {
  width: 1px;
  height: 24px;
  margin-left: 12px;
  background: #43454a;
}
.run-body {
  flex: 1;
  display: flex;
  min-height: 0;
}
.gutter {
  width: 48px;
  flex: none;
  display: flex;
  flex-direction: column;
  align-items: center;
  padding-top: 15px;
}
.gutter svg:nth-child(2) { margin-top: 14px; }
.gutter svg:nth-child(3) { margin-top: 17px; }
.gutter svg:nth-child(5) { margin-top: 11px; }
.gutter svg:nth-child(6) { margin-top: 14px; }
.gut-on {
  width: 28px;
  height: 28px;
  margin-top: 8px;
  border-radius: 4px;
  background: #43454a;
  display: flex;
  align-items: center;
  justify-content: center;
}
.console {
  flex: 1;
  position: relative;
  overflow: hidden;
  padding: 6px 0 0 14px;
  background: #1e1f22;
  border-bottom: 2px solid #1e1f22;
  font-family: "DejaVu Sans Mono", monospace;
  font-size: 16.600px;
  line-height: 27.400px;
  color: #b4b6bc;
}
.con-line {
  position: relative;
}
.console em {
  font-style: normal;
  color: #5f9e6b;
}
.con-hbar {
  position: absolute;
  left: 14px;
  bottom: 0;
  width: 324px;
  height: 10px;
  background: #4a4b4e;
}
.con-vbar {
  position: absolute;
  right: 2px;
  bottom: 1px;
  width: 11px;
  height: 33px;
  background: #3c3e42;
}
.con-right {
  width: 50px;
  flex: none;
}

.ide-status {
  height: 37px;
  flex: none;
  display: flex;
  align-items: center;
  padding: 0 0 2px 18px;
  border-top: 1px solid #1e1f22;
  font-size: 16.400px;
  color: #9da0a8;
  white-space: nowrap;
}
.mod-square {
  width: 9px;
  height: 11px;
  flex: none;
  border: 1.500px solid #548af7;
  border-radius: 2px;
}
.st-a {
  margin-left: 6px;
}
.st-chev {
  width: 14px;
  height: 14px;
  flex: none;
  margin: 0 8px;
  color: #9da0a8;
}
.st-py {
  width: 18px;
  height: 20px;
  flex: none;
  margin-right: 6px;
}
.st-file {
  width: 152px;
  overflow: hidden;
}
.st-right {
  display: flex;
  align-items: center;
  gap: 20px;
  margin-left: auto;
  padding-right: 21px;
}
.st-right svg {
  margin-left: 4px;
}

/* ---------- PowerPoint ---------- */
.ppt {
  position: absolute;
  left: 961px;
  top: 0;
  width: 959px;
  height: 1019px;
  display: flex;
  flex-direction: column;
  background: #e6e6e6;
  border-left: 2px solid #6a6a6a;
  border-top: 1px solid #8a6a5e;
  border-bottom: 1px solid #7c7c7c;
  color: #444;
}

.ppt-top {
  height: 43px;
  flex: none;
  display: flex;
  align-items: center;
  background: #b7472a;
  padding-right: 23px;
}
.q1 { margin-left: 22px; }
.q2 { margin-left: 15px; }
.q3 { margin-left: 8px; }
.q4 { margin-left: 7px; }
.q5 { margin-left: 13px; }
.q6 { margin-left: 20px; }
.ppt-title {
  width: 370px;
  margin-left: 26px;
  font-size: 14.200px;
  color: #f3c4b3;
  white-space: nowrap;
  overflow: hidden;
}
.q7 { margin-left: 27px; }
.entrar {
  width: 61px;
  height: 23px;
  margin-left: 25px;
  background: #fcc4b2;
  color: #a8391d;
  font-size: 14px;
  text-align: center;
  line-height: 23px;
}
.q8 { margin-left: 28px; }
.ppt-top .win-btns { gap: 43px; }

.ribbon {
  height: 40px;
  flex: none;
  display: grid;
  grid-template-columns: 88px 82px 57px 63px 78px 79px 79px 70px 54px 77px 56px 1fr;
  align-items: center;
  padding-bottom: 2px;
  background: #f3f2f1;
  border-bottom: 2px solid #d4d4d4;
  font-size: 16.200px;
}
.tab {
  height: 27px;
  line-height: 27px;
  padding-left: 5px;
  overflow: hidden;
  white-space: nowrap;
  color: #3d3d3d;
  border-right: 1px solid #d2d2d2;
}
.tab.first {
  padding-left: 14px;
  border-right: 0;
}
.tab:nth-child(2) {
  padding-left: 7px;
}
.share {
  height: 30px;
  width: 140px;
  margin-left: 17px;
  display: flex;
  align-items: center;
  justify-content: center;
  gap: 5px;
  background: #e0dfde;
  border: 1px solid #b4b4b4;
  border-radius: 2px;
  font-size: 15.300px;
  font-weight: 600;
  color: #a6a6a6;
}

.protected {
  height: 63px;
  flex: none;
  display: flex;
  align-items: center;
  background: #fcf5b5;
  border-bottom: 2px solid #e6dd9e;
  font-size: 14.100px;
  color: #333;
}
.shield {
  margin-left: 11px;
}
.prot-title {
  margin-left: 11px;
  font-size: 14.500px;
  white-space: nowrap;
}
.prot-text {
  margin-left: 12px;
  line-height: 20px;
  white-space: nowrap;
}
.enable {
  width: 149px;
  height: 26px;
  margin-left: auto;
  background: #fff;
  border: 1px solid #8f8f8f;
  font-size: 14.600px;
  text-align: center;
  line-height: 24px;
}
.prot-x {
  width: 63px;
  padding-left: 22px;
  text-align: center;
  font-size: 18px;
  font-weight: 700;
}

.ppt-body {
  flex: 1;
  min-height: 0;
  display: flex;
}

.thumbs {
  width: 89px;
  flex: none;
  padding-top: 1px;
  background: linear-gradient(90deg, #d2d2d2 0, #e6e6e6 16px);
}
.th {
  height: 38px;
  display: flex;
  align-items: center;
  padding-left: 3px;
  font-size: 18px;
  font-weight: 300;
  color: #444;
}
.th span {
  width: 39px;
}
.th i {
  width: 21px;
  height: 13px;
  background:
    linear-gradient(#c8cad0, #c8cad0) 4px 5px / 10px 1px no-repeat,
    linear-gradient(#d4d6da, #d4d6da) 6px 8px / 9px 1px no-repeat,
    linear-gradient(90deg, #556 1px, #c9cbd1 1px, #c9cbd1 17px, #776 17px) 1px 1px / 18px 1px no-repeat,
    #fff;
  border-bottom: 1px solid #8f93a3;
  box-shadow: 0 0 0 1px #d0d0d0;
}
.th.cur {
  color: #c43e1c;
}
.th.cur i {
  width: 28px;
  height: 19px;
  margin-left: -3px;
  border: 3px solid #b7472a;
  box-shadow: none;
}

.thumb-scroll {
  width: 19px;
  flex: none;
  display: flex;
  flex-direction: column;
  padding-top: 3px;
  background: #dcdcdc;
}
.sb-btn {
  height: 18px;
  flex: none;
  background: #fff;
  border: 1px solid #cfcfcf;
  position: relative;
}
.sb-btn::after {
  content: "";
  position: absolute;
  left: 4px;
  top: 5px;
  border: 5px solid transparent;
  border-top: 0;
  border-bottom: 7px solid #6d6d6d;
}
.sb-btn.down::after {
  transform: rotate(180deg);
}
.thumb-scroll .sb-thumb {
  height: 274px;
  margin-top: 524px;
  background: #fff;
  border: 1px solid #cfcfcf;
}
.thumb-scroll .down {
  margin-top: 7px;
}

.editor {
  flex: 1;
  min-width: 0;
  display: flex;
  flex-direction: column;
  margin-left: 4px;
  border-left: 1px solid #cfcfcf;
}
.slide-area {
  height: 777px;
  flex: none;
  padding: 161px 0 0 11px;
  border-bottom: 2px solid #bfbfbf;
}
.notes-area {
  flex: 1;
}

.slide {
  position: relative;
  width: 802px;
  height: 452px;
  display: flex;
  flex-direction: column;
  background: #fff;
  border: 1px solid #c6c6c6;
  color: #111;
  font-family: Lato, "Open Sans", sans-serif;
}
.slide-head {
  display: flex;
  align-items: center;
  margin-top: 34px;
  height: 40px;
}
.slide-square {
  width: 55px;
  height: 39px;
  background: #2f3e5c;
}
.slide-head h2 {
  margin: -5px 0 0 5px;
  font-size: 21.800px;
  font-weight: 700;
  color: #000;
  white-space: nowrap;
}
.slide-text {
  width: 640px;
  margin-left: 100px;
  font-size: 18.800px;
  line-height: 21.800px;
  word-spacing: -1px;
  text-align: justify;
  color: #1a1a1a;
}
.slide-text p {
  margin: 9px 0 0;
}
.slide-text .ex {
  margin-top: -3px;
}
.slide-text .ex + p {
  margin-top: 7.500px;
}
.slide-logo {
  position: absolute;
  left: 688px;
  top: 24px;
}
.map {
  position: absolute;
  left: 512px;
  top: 181px;
}
.map-names text {
  font-family: "Liberation Sans", sans-serif;
  font-size: 27px;
  fill: #555;
}
.map-nums text {
  font-family: "Open Sans", sans-serif;
  font-size: 33px;
  fill: #111;
}
.slide-foot {
  position: absolute;
  left: 0;
  right: 0;
  bottom: 19px;
  height: 6px;
  background: #2f3e5c;
  color: #8a93a6;
  font-size: 8px;
  line-height: 6px;
  text-align: right;
  padding-right: 8px;
}
.slide-teal {
  position: absolute;
  left: 0;
  right: 0;
  bottom: 0;
  height: 16px;
  background: #6fc0ae;
}

.main-scroll {
  width: 20px;
  flex: none;
  display: flex;
  flex-direction: column;
  align-items: center;
  padding-top: 3px;
  background: #e0e0e0;
}
.main-scroll .sb-btn {
  width: 100%;
}
.sb-gap {
  height: 649px;
  flex: none;
}
.sb-small {
  width: 100%;
  height: 20px;
  flex: none;
  background: #fff;
  border: 1px solid #cfcfcf;
}
.main-scroll .down {
  margin-top: 1px;
}
.page-arrows {
  margin-top: 7px;
}

.ppt-status {
  height: 27px;
  flex: none;
  display: flex;
  align-items: center;
  background: #f3f2f1;
  border-top: 2px solid #cfcfcf;
  font-size: 12.400px;
  color: #555;
  white-space: nowrap;
}
.ps1 { margin-left: 8px; width: 124px; }
.ps2 { width: 136px; }
.ps3 { margin-right: 2px; }
.ps4 { margin: 0 3px 0 23px; }
.vw {
  width: 50px;
  height: 25px;
  display: flex;
  align-items: center;
  justify-content: center;
}
.vw.on {
  background: #d2d0ce;
  margin-left: 23px;
}
.zm {
  width: 14px;
  margin-left: 4px;
  font-size: 16px;
  text-align: center;
}
.slider {
  position: relative;
  width: 125px;
  height: 1px;
  margin: 0 3px;
  background: #b0b0b0;
}
.knob {
  position: absolute;
  left: 30px;
  top: -6px;
  width: 5px;
  height: 13px;
  background: #666;
}
.tick {
  position: absolute;
  left: 62px;
  top: -3px;
  width: 1px;
  height: 7px;
  background: #b0b0b0;
}
.pct {
  margin: 0 14px;
}

/* ---------- Figure ---------- */
.figure {
  position: absolute;
  left: 163px;
  top: 48px;
  width: 799px;
  height: 685px;
  display: flex;
  flex-direction: column;
  overflow: hidden;
  border-radius: 8px;
  background: #fff;
  box-shadow: 0 1px 8px rgba(0, 0, 0, 0.35);
}
.fig-title {
  height: 37px;
  flex: none;
  display: flex;
  align-items: center;
  padding: 0 22px 0 9px;
  background: #eff3fa;
  font-size: 14px;
  color: #111;
}
.fig-ico {
  width: 20px;
  height: 20px;
  margin-right: 5px;
}
.plot {
  display: block;
  flex: none;
}
.plot-labels text {
  font-family: "DejaVu Sans", sans-serif;
  font-weight: 700;
  font-size: 20.800px;
  text-anchor: middle;
  fill: #000;
}
.fig-tools {
  flex: 1;
  display: flex;
  align-items: center;
  gap: 9px;
  padding: 0 15px 0 7px;
  background: #f0f0f0;
}
.fig-tools .gr {
  fill: #aaa;
  stroke: #555;
}
.ft-sep {
  width: 1px;
  height: 30px;
  background: #bdbdbd;
}
.coords {
  margin-left: auto;
  font-size: 16.300px;
  color: #111;
}

/* ---------- Taskbar ---------- */
.taskbar {
  position: absolute;
  left: 0;
  right: 0;
  bottom: 0;
  height: 60px;
  display: flex;
  align-items: center;
  gap: 7px;
  padding-left: 716px;
  background: linear-gradient(90deg, #eef4fa 0, #dfe8f6 500px, #d4def3 1100px, #e4edf8 1700px);
}
.task {
  position: relative;
  width: 48px;
  height: 48px;
  flex: none;
  display: flex;
  align-items: center;
  justify-content: center;
  border-radius: 5px;
}
.task.dot::after {
  content: "";
  position: absolute;
  left: 21px;
  bottom: 0;
  width: 7px;
  height: 4px;
  border-radius: 2px;
  background: #6f7680;
}
.task.active {
  background: #f0f4fb;
  box-shadow: 0 1px 2px rgba(0, 0, 0, 0.2);
}
.task.active::after {
  content: "";
  position: absolute;
  left: 14px;
  bottom: 0;
  width: 20px;
  height: 5px;
  border-radius: 3px;
  background: #0a74d6;
}
.tray {
  display: flex;
  align-items: center;
  margin-left: auto;
  padding-right: 26px;
}
.tr-net {
  margin: 0 7px 0 23px;
}
.clock {
  width: 95px;
  text-align: right;
  font-size: 15px;
  line-height: 19px;
  color: #111;
  margin-right: 10px;
}
```
